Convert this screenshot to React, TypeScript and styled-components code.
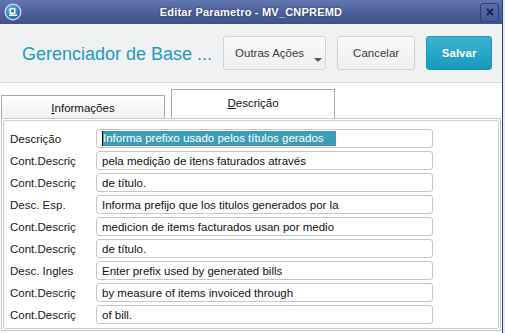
import styled, { createGlobalStyle } from 'styled-components';

const GlobalStyle = createGlobalStyle`
  html, body {
    margin: 0;
    padding: 0;
    background: #e9eaec;
    font-family: 'Liberation Sans', Arial, sans-serif;
  }
`;

const rows = [
  { label: 'Descrição', value: 'Informa prefixo usado pelos títulos gerados', selected: true },
  { label: 'Cont.Descriç', value: 'pela medição de itens faturados através' },
  { label: 'Cont.Descriç', value: 'de título.' },
  { label: 'Desc. Esp.', value: 'Informa prefijo que los titulos generados por la' },
  { label: 'Cont.Descriç', value: 'medicion de items facturados usan por medio' },
  { label: 'Cont.Descriç', value: 'de título.' },
  { label: 'Desc. Ingles', value: 'Enter prefix used by generated bills' },
  { label: 'Cont.Descriç', value: 'by measure of items invoiced through' },
  { label: 'Cont.Descriç', value: 'of bill.' },
];

// janela
const Window = styled.div`
  width: 502px;
  height: 333px;
  background: #fff;
  border-right: 1px solid #2b3f78;
  display: flex;
  flex-direction: column;
  overflow: hidden;
`;

const TitleBar = styled.div`
  height: 24px;
  flex-shrink: 0;
  background: linear-gradient(#6276b0, #4a5d98 60%, #3f528c);
  display: flex;
  align-items: center;
  padding: 0 3px 0 4px;
`;

const TitleText = styled.div`
  flex: 1;
  text-align: center;
  color: #fff;
  font-size: 11px;
  font-weight: bold;
  text-shadow: 0 0 2px #22305a;
  letter-spacing: 0.2px;
`;

const CloseBtn = styled.div`
  width: 17px;
  height: 17px;
  border: 1px solid #2e3f72;
  border-radius: 3px;
  background: linear-gradient(#5a6ea6, #45599a);
  display: flex;
  align-items: center;
  justify-content: center;
`;

const Header = styled.div`
  height: 58px;
  flex-shrink: 0;
  background: #f0f1f3;
  border-bottom: 1px solid #d6d8dc;
  display: flex;
  align-items: center;
  padding: 0 10px 0 22px;
`;

const HeaderTitle = styled.div`
  flex: 1;
  white-space: nowrap;
  color: #1f9bc3;
  font-size: 18px;
  padding-top: 3px;
`;

const Button = styled.div<{ $w: number; $primary?: boolean }>`
  width: ${(p) => p.$w}px;
  flex-shrink: 0;
  height: 34px;
  box-sizing: border-box;
  margin-left: 11px;
  border-radius: 3px;
  border: 1px solid ${(p) => (p.$primary ? '#1f95b5' : '#d0d2d5')};
  background: ${(p) => (p.$primary ? 'linear-gradient(#3db2cf, #159ac0)' : 'linear-gradient(#fafafa, #eeeff0)')};
  color: ${(p) => (p.$primary ? '#fff' : '#3a3a3a')};
  font-size: 11.5px;
  font-weight: ${(p) => (p.$primary ? 'bold' : 'normal')};
  display: flex;
  align-items: center;
  justify-content: center;
  position: relative;
`;

const ButtonLabel = styled.span<{ $shift?: number }>`
  margin-right: ${(p) => p.$shift ?? 0}px;
`;

const Caret = styled.div`
  position: absolute;
  right: 3px;
  bottom: 7px;
  width: 0;
  height: 0;
  border-left: 4px solid transparent;
  border-right: 4px solid transparent;
  border-top: 4px solid #555;
`;

const TabStrip = styled.div`
  display: flex;
  align-items: flex-end;
  height: 35px;
  flex-shrink: 0;
  padding-left: 1px;
  gap: 6px;
`;

const Tab = styled.div<{ $active?: boolean }>`
  width: 164px;
  height: ${(p) => (p.$active ? 29 : 23)}px;
  box-sizing: border-box;
  border: 1px solid #a9a9a9;
  border-bottom: none;
  background: ${(p) => (p.$active ? '#fff' : 'linear-gradient(#fdfdfd, #f1f1f1)')};
  font-size: 11.5px;
  color: #111;
  display: flex;
  justify-content: center;
  padding-top: ${(p) => (p.$active ? 7 : 6)}px;
  u {
    text-decoration: underline;
  }
`;

const Panel = styled.div`
  flex: 1;
  margin: 0 1px 2px 1px;
  border: 1px solid #c9c9c9;
  padding: 1px;
  display: flex;
`;

const PanelInner = styled.div`
  flex: 1;
  border: 1px solid #d0d0d0;
  border-radius: 2px;
  padding: 8px 0 0 6px;
  display: flex;
  flex-direction: column;
  gap: 3px;
`;

const Row = styled.div`
  display: flex;
  align-items: center;
  height: 19px;
`;

const Label = styled.div`
  width: 86px;
  font-size: 11.5px;
  color: #1a1a1a;
`;

const Field = styled.div`
  width: 337px;
  height: 19px;
  box-sizing: border-box;
  border: 1px solid #c6c6c6;
  border-radius: 3px;
  background: #fff;
  font-size: 11.5px;
  color: #111;
  display: flex;
  align-items: center;
  padding-left: 5px;
  white-space: nowrap;
`;

const Selected = styled.span`
  background: #3a9db7;
  color: #fff;
  padding-right: 12px;
  border-left: 1px solid #000;
  line-height: 15px;
`;

function Logo() {
  return (
    <svg width="18" height="18" viewBox="0 0 18 18">
      <defs>
        <radialGradient id="lg" cx="0.4" cy="0.35" r="0.7">
          <stop offset="0" stopColor="#6fb6f0" />
          <stop offset="1" stopColor="#1d5fa8" />
        </radialGradient>
      </defs>
      <circle cx="9" cy="9" r="8.5" fill="#c8d4ea" />
      <circle cx="9" cy="9" r="7" fill="url(#lg)" />
      <rect x="5.5" y="5" width="6" height="6" rx="1" fill="#fff" />
      <rect x="7" y="6.5" width="3" height="3" fill="#2d78c8" />
      <rect x="5" y="11.5" width="8" height="1.5" fill="#fff" />
    </svg>
  );
}

export default function App() {
  return (
    <>
      <GlobalStyle />
      <Window>
        <TitleBar>
          <Logo />
          <TitleText>Editar Parametro - MV_CNPREMD</TitleText>
          <CloseBtn>
            <svg width="8" height="8" viewBox="0 0 8 8">
              <path d="M1 1 L7 7 M7 1 L1 7" stroke="#1c2544" strokeWidth="2" />
            </svg>
          </CloseBtn>
        </TitleBar>
        <Header>
          <HeaderTitle>Gerenciador de Base ...</HeaderTitle>
          <Button $w={103}>
            <ButtonLabel $shift={10}>Outras Ações</ButtonLabel>
            <Caret />
          </Button>
          <Button $w={78}>Cancelar</Button>
          <Button $w={66} $primary>
            Salvar
          </Button>
        </Header>
        <TabStrip>
          <Tab>
            <span>
              <u>I</u>nformações
            </span>
          </Tab>
          <Tab $active>
            <span>
              <u>D</u>escrição
            </span>
          </Tab>
        </TabStrip>
        <Panel>
          <PanelInner>
            {rows.map((r, i) => (
              <Row key={i}>
                <Label>{r.label}</Label>
                <Field>{r.selected ? <Selected>{r.value}</Selected> : r.value}</Field>
              </Row>
            ))}
          </PanelInner>
        </Panel>
      </Window>
    </>
  );
}
